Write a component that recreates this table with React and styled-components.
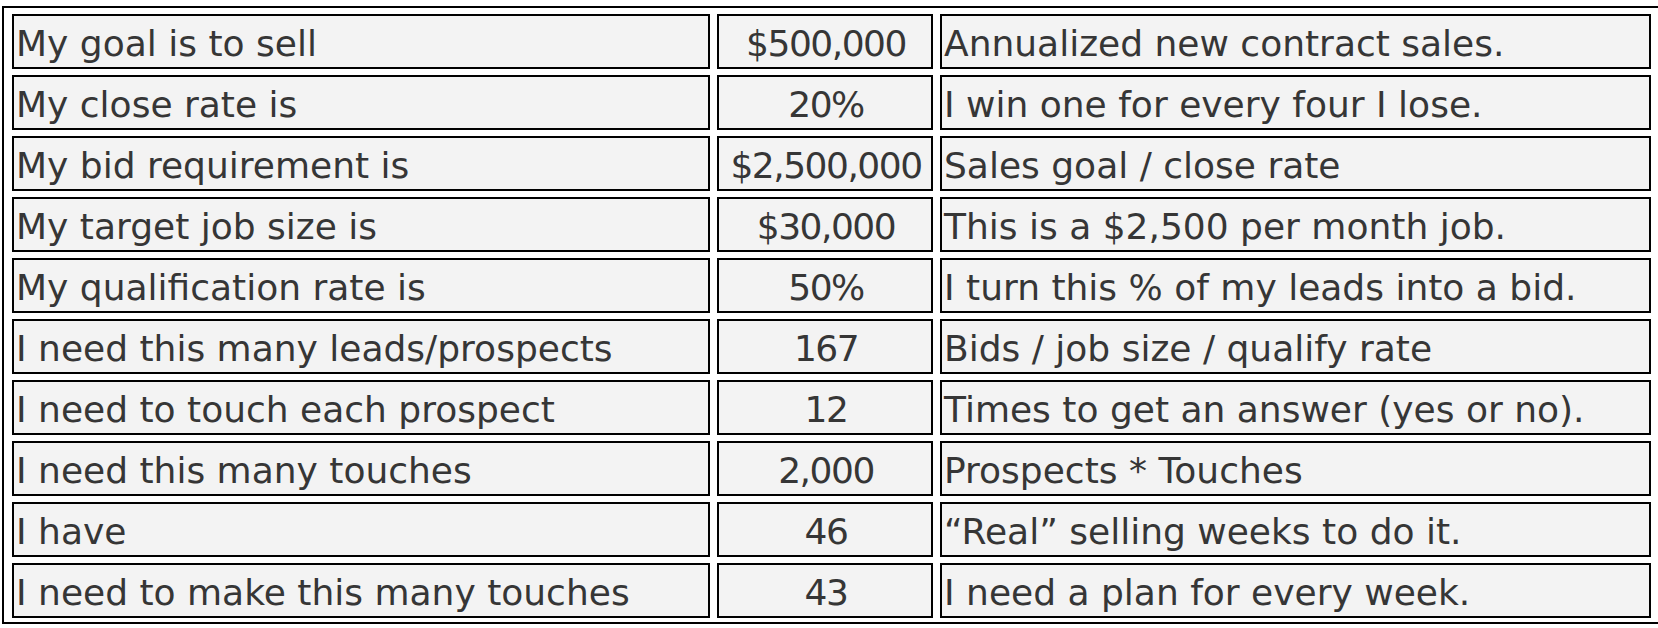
import React from 'react';
import styled, { createGlobalStyle } from 'styled-components';

const GlobalStyle = createGlobalStyle`
  html, body {
    margin: 0;
    padding: 0;
    background: #fff;
    overflow: hidden;
  }
`;

const Page = styled.div`
  padding: 6px 0 0 2px;
  width: 1700px;
`;

const Sheet = styled.div`
  display: inline-grid;
  grid-template-columns: 698px 216px 711px;
  grid-auto-rows: 55px;
  column-gap: 7px;
  row-gap: 6px;
  padding: 6px 8px 4px 8px;
  border: 2px solid #000;
  font-family: "DejaVu Sans", "Liberation Sans", sans-serif;
  font-size: 36px;
  color: #363636;
`;

const Cell = styled.div`
  box-sizing: border-box;
  border: 2px solid #000;
  background: #f3f3f3;
  display: flex;
  align-items: center;
  justify-content: ${(p) => (p.$center ? 'center' : 'flex-start')};
  letter-spacing: ${(p) => (p.$center ? '-1.5px' : '0')};
  padding: 4px 0 0 2px;
  white-space: nowrap;
  overflow: hidden;
`;

const rows = [
  ['My goal is to sell', '$500,000', 'Annualized new contract sales.'],
  ['My close rate is', '20%', 'I win one for every four I lose.'],
  ['My bid requirement is', '$2,500,000', 'Sales goal / close rate'],
  ['My target job size is', '$30,000', 'This is a $2,500 per month job.'],
  ['My qualification rate is', '50%', 'I turn this % of my leads into a bid.'],
  ['I need this many leads/prospects', '167', 'Bids / job size / qualify rate'],
  ['I need to touch each prospect', '12', 'Times to get an answer (yes or no).'],
  ['I need this many touches', '2,000', 'Prospects * Touches'],
  ['I have', '46', '\u201CReal\u201D selling weeks to do it.'],
  ['I need to make this many touches', '43', 'I need a plan for every week.'],
];

const App = () => (
  <Page>
    <GlobalStyle />
    <Sheet>
      {rows.map(([label, value, note]) => (
        <React.Fragment key={label}>
          <Cell>{label}</Cell>
          <Cell $center>{value}</Cell>
          <Cell>{note}</Cell>
        </React.Fragment>
      ))}
    </Sheet>
  </Page>
);

export default App;
